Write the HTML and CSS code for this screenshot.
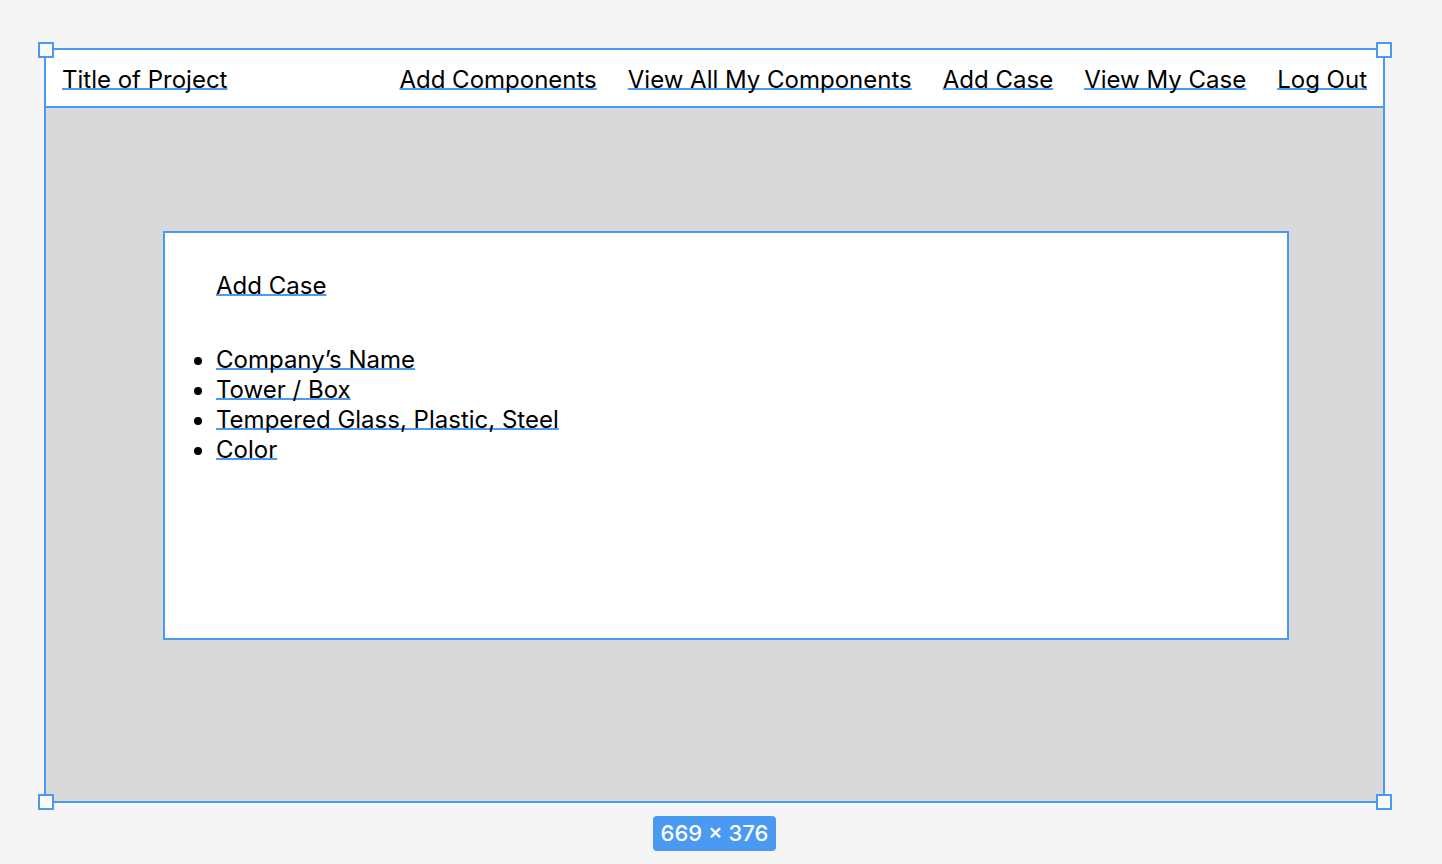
FILE: index.html
```html
<!DOCTYPE html>
<html lang="en">
<head>
<meta charset="utf-8">
<title>Add Case</title>
<link rel="stylesheet" href="styles.css">
</head>
<body>
<div class="canvas">
  <div class="frame">
    <span class="handle handle-tl"></span>
    <span class="handle handle-tr"></span>
    <span class="handle handle-bl"></span>
    <span class="handle handle-br"></span>
    <header class="nav">
      <span class="nav-title u">Title of Project</span>
      <nav class="nav-links">
        <span class="u">Add Components</span>
        <span class="u">View All My Components</span>
        <span class="u">Add Case</span>
        <span class="u">View My Case</span>
        <span class="u">Log Out</span>
      </nav>
    </header>
    <main class="stage">
      <section class="card">
        <h1 class="card-title"><span class="u">Add Case</span></h1>
        <ul class="fields">
          <li><span class="u">Company’s Name</span></li>
          <li><span class="u">Tower / Box</span></li>
          <li><span class="u">Tempered Glass, Plastic, Steel</span></li>
          <li><span class="u">Color</span></li>
        </ul>
      </section>
    </main>
  </div>
  <div class="size-badge">669 × 376</div>
</div>
</body>
</html>
```
FILE: styles.css
```css
html, body {
  margin: 0;
  padding: 0;
  background: #f5f5f5;
}

body {
  font-family: "Inter", "Noto Sans", sans-serif;
  color: #000;
  font-size: 24px;
}

.canvas {
  display: flex;
  flex-direction: column;
  align-items: center;
  width: 1341px;
  padding: 48px 0 0 44px;
}

.frame {
  position: relative;
  width: 1341px;
  height: 755px;
  box-sizing: border-box;
  border: 2px solid #4a9af4;
  display: flex;
  flex-direction: column;
}

.handle {
  position: absolute;
  width: 12px;
  height: 12px;
  background: #fafafa;
  border: 2px solid #4a9af4;
  z-index: 2;
}
.handle-tl { left: -8px; top: -8px; }
.handle-tr { right: -9px; top: -8px; }
.handle-bl { left: -8px; bottom: -9px; }
.handle-br { right: -9px; bottom: -9px; }

.u {
  text-decoration-line: underline;
  text-decoration-color: #4a9af4;
  text-decoration-thickness: 2px;
  text-underline-offset: 0px;
  text-decoration-skip-ink: none;
}

.nav {
  height: 58px;
  flex: none;
  box-sizing: border-box;
  background: #fff;
  border-bottom: 2px solid #4a9af4;
  display: flex;
  align-items: center;
  justify-content: space-between;
  padding: 2px 16px 0 16px;
  line-height: normal;
}

.nav-links {
  display: flex;
  gap: 31px;
}

.stage {
  flex: 1;
  background: #d9d9d9;
  padding: 123px 0 0 117px;
}

.card {
  width: 1126px;
  height: 409px;
  box-sizing: border-box;
  background: #fff;
  border: 2px solid #4a9af4;
  padding: 38px 0 0 51px;
}

.card-title {
  margin: 0;
  font-size: 24px;
  font-weight: 400;
  line-height: 30px;
}

.fields {
  margin: 44px 0 0 0;
  padding: 0;
  list-style: disc outside;
  line-height: 30px;
}

.size-badge {
  margin-top: 13px;
  height: 35px;
  padding: 0 8px;
  box-sizing: border-box;
  background: #4a9af4;
  color: #fff;
  border-radius: 4px;
  font-size: 22px;
  font-weight: 500;
  line-height: 35px;
}
```
